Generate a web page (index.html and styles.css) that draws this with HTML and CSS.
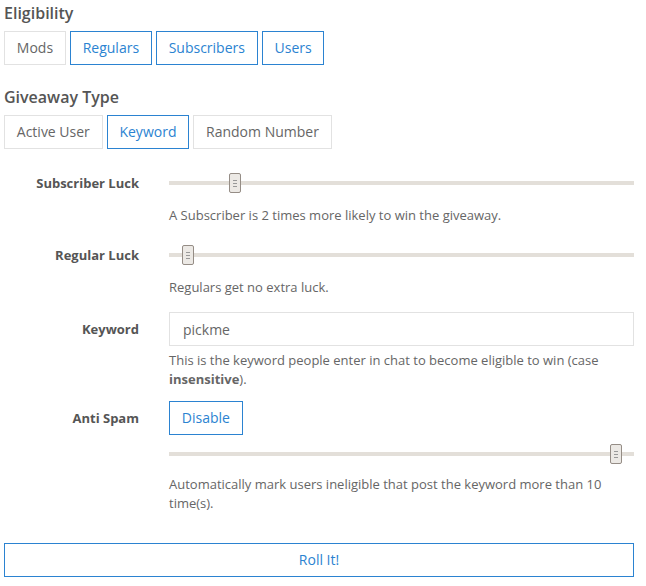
FILE: index.html
```html
<!DOCTYPE html>
<html lang="en">
<head>
  <meta charset="UTF-8">
  <title>Giveaway</title>
  <link rel="stylesheet" href="styles.css">
</head>
<body>
  <div class="container">
    <h4>Eligibility</h4>
    <div class="btn-group">
      <button class="btn">Mods</button>
      <button class="btn active">Regulars</button>
      <button class="btn active">Subscribers</button>
      <button class="btn active">Users</button>
    </div>

    <h4>Giveaway Type</h4>
    <div class="btn-group">
      <button class="btn">Active User</button>
      <button class="btn active">Keyword</button>
      <button class="btn">Random Number</button>
    </div>

    <form class="form-horizontal">
      <div class="form-group slider-group">
        <label>Subscriber Luck</label>
        <div class="control">
          <div class="slider"><span class="handle" style="left: 14.2%"></span></div>
          <p class="help">A Subscriber is 2 times more likely to win the giveaway.</p>
        </div>
      </div>
      <div class="form-group slider-group">
        <label>Regular Luck</label>
        <div class="control">
          <div class="slider"><span class="handle" style="left: 4%"></span></div>
          <p class="help">Regulars get no extra luck.</p>
        </div>
      </div>
      <div class="form-group keyword-group">
        <label class="input-label">Keyword</label>
        <div class="control">
          <input type="text" class="form-control" value="pickme">
          <p class="help">This is the keyword people enter in chat to become eligible to win (case <b>insensitive</b>).</p>
        </div>
      </div>
      <div class="form-group spam-group">
        <label class="input-label">Anti Spam</label>
        <div class="control">
          <button type="button" class="btn active">Disable</button>
          <div class="slider spam"><span class="handle" style="left: 96.1%"></span></div>
          <p class="help">Automatically mark users ineligible that post the keyword more than 10 time(s).</p>
        </div>
      </div>
    </form>

    <button class="btn active btn-block">Roll It!</button>
  </div>
</body>
</html>
```

FILE: styles.css
```css
:root {
  --text: #666;
  --label: #555;
  --blue: #2b83d1;
  --border: #e2e2e2;
  --track: #e3dfd9;
  --thumb: #ece9e5;
  --thumb-border: #958d86;
}
body {
  margin: 0;
  font-family: "Open Sans", Arial, sans-serif;
  font-size: 14px;
  color: var(--text);
  background: #fff;
}
.container { width: 630px; padding: 0 4px; }

h4 {
  margin: 0;
  padding-top: 3px;
  font-size: 16px;
  font-weight: 600;
  line-height: 20px;
  color: var(--label);
}
.btn-group { display: flex; gap: 4px; margin: 8px 0 19px; }
.btn {
  font-family: inherit; font-size: 14px; line-height: 20px;
  color: var(--text); background: #fff;
  border: 1px solid var(--border);
  padding: 6px 11.8px;
  border-radius: 0;
  cursor: pointer;
}
.btn.active { border-color: var(--blue); color: var(--blue); }

.form-horizontal { margin-top: 19px; }
.form-group {
  display: grid;
  grid-template-columns: 135px 465px;
  column-gap: 30px;
  margin-bottom: 15px;
}
.form-group.keyword-group { margin-bottom: 12px; }
.form-group label {
  text-align: right;
  font-size: 13px;
  font-weight: 700;
  color: var(--label);
  line-height: 20px;
  padding-top: 5px;
}
.form-group label.input-label { padding-top: 7px; }
.control { min-width: 0; }

.slider {
  position: relative;
  height: 4px;
  margin: 13px 0;
  background: var(--track);
}
.slider-group .slider { margin: 13px 0 20px; }
.slider.spam { margin: 17px 0 0; }
.handle {
  position: absolute;
  top: -8px;
  width: 10px; height: 18px;
  margin-left: -6px;
  background: var(--thumb);
  border: 1px solid var(--thumb-border);
  border-radius: 2px;
}
.handle::before {
  content: "";
  position: absolute;
  left: 3px; top: 6px;
  width: 4px; height: 5px;
  border-top: 1px solid #999;
  border-bottom: 1px solid #999;
  background: linear-gradient(#999, #999) 0 2px / 4px 1px no-repeat;
}

.help {
  margin: 5px 0 0;
  font-size: 13px;
  line-height: 19px;
}
.slider-group .help { margin-top: 0; line-height: 20px; }
.spam-group .help { margin-top: 19px; }

.form-control {
  display: block;
  box-sizing: border-box;
  width: 100%; height: 34px;
  padding: 6px 13px;
  font-family: inherit; font-size: 14px;
  color: var(--text);
  border: 1px solid var(--border);
  border-radius: 0;
  outline: none;
}

.btn-block { display: block; width: 630px; margin-top: 30px; }
```
